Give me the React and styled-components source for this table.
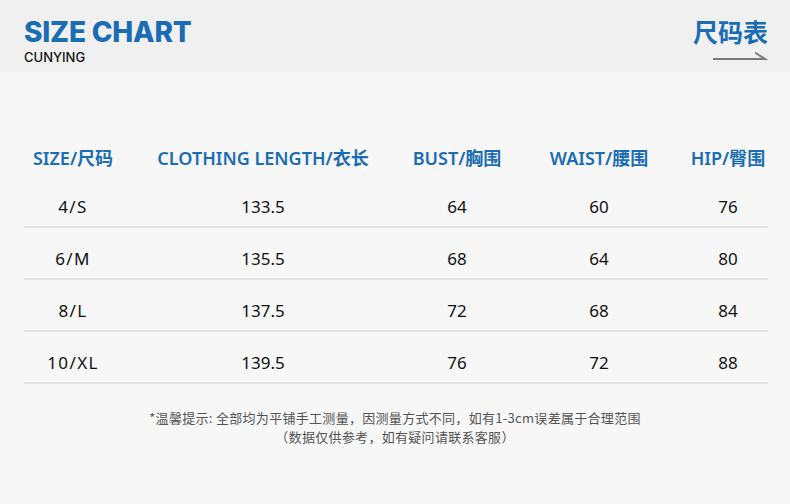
import React from 'react';
import styled, { createGlobalStyle } from 'styled-components';

const GlobalStyle = createGlobalStyle`
  html, body {
    margin: 0;
    padding: 0;
    background: #f7f7f7;
  }
  body {
    font-family: "Noto Sans", "Noto Sans CJK SC", sans-serif;
  }
`;

const columns = [
  { en: 'SIZE', zh: '尺码' },
  { en: 'CLOTHING LENGTH', zh: '衣长' },
  { en: 'BUST', zh: '胸围' },
  { en: 'WAIST', zh: '腰围' },
  { en: 'HIP', zh: '臀围' },
];

const rows = [
  ['4/S', '133.5', '64', '60', '76'],
  ['6/M', '135.5', '68', '64', '80'],
  ['8/L', '137.5', '72', '68', '84'],
  ['10/XL', '139.5', '76', '72', '88'],
];

function App() {
  return (
    <Page>
      <GlobalStyle />
      <Header>
        <Brand>
          <Title>SIZE CHART</Title>
          <SubTitle>CUNYING</SubTitle>
        </Brand>
        <Badge>
          <BadgeText>尺码表</BadgeText>
          <svg width="56" height="12" viewBox="0 0 56 12">
            <path d="M1 9 H53 L43 2.5" fill="none" stroke="#7a7a7a" strokeWidth="2" />
          </svg>
        </Badge>
      </Header>

      <Table>
        <HeadRow>
          {columns.map(c => (
            <HeadCell key={c.en}>{c.en}/{c.zh}</HeadCell>
          ))}
        </HeadRow>
        {rows.map(r => (
          <Row key={r[0]}>
            {r.map((v, i) => (
              <Cell key={i} $spaced={i === 0}>{v}</Cell>
            ))}
          </Row>
        ))}
      </Table>

      <Note>
        *温馨提示: 全部均为平铺手工测量，因测量方式不同，如有1-3cm误差属于合理范围
        <br />
        （数据仅供参考，如有疑问请联系客服）
      </Note>
    </Page>
  );
}

export default App;

const Page = styled.div`
  width: 790px;
  height: 504px;
  background: #f7f7f7;
  overflow: hidden;
`

const Header = styled.div`
  height: 72px;
  background: #f0f0f0;
  display: flex;
  justify-content: space-between;
  padding: 0 22px 0 24px;
  box-sizing: border-box;
`

const Brand = styled.div`
  display: flex;
  flex-direction: column;
  padding-top: 14px;
`

const Title = styled.div`
  font-family: Inter, "Noto Sans", sans-serif;
  font-weight: 800;
  font-size: 28px;
  line-height: 36px;
  color: #1a6db4;
  letter-spacing: -0.2px;
`

const SubTitle = styled.div`
  font-family: Inter, "Noto Sans", sans-serif;
  font-weight: 500;
  font-size: 13px;
  line-height: 14px;
  color: #111;
`

const Badge = styled.div`
  display: flex;
  flex-direction: column;
  align-items: flex-end;
  padding-top: 15px;
`

const BadgeText = styled.div`
  font-family: "Noto Sans CJK SC", sans-serif;
  font-weight: 700;
  font-size: 25px;
  line-height: 32px;
  color: #1a6db4;
  margin-bottom: 3px;
`

const Table = styled.div`
  margin: 74px 22px 0 24px;
`

const grid = `
  display: grid;
  grid-template-columns: 98px 282px 106px 178px 80px;
  justify-items: center;
`

const HeadRow = styled.div`
  ${grid}
  height: 30px;
`

const HeadCell = styled.div`
  font-family: "Noto Sans", "Noto Sans CJK SC", sans-serif;
  font-weight: 600;
  font-size: 18px;
  line-height: 24px;
  color: #1a6db4;
  white-space: nowrap;
`

const Row = styled.div`
  ${grid}
  height: 52px;
  box-sizing: border-box;
  border-bottom: 2px solid #e3e3e3;
  padding-top: 19px;
`

const Cell = styled.div`
  font-family: "Noto Sans", sans-serif;
  font-size: 17px;
  line-height: 24px;
  color: #111;
  letter-spacing: ${p => (p.$spaced ? '1.4px' : '0')};
`

const Note = styled.div`
  margin-top: 24px;
  text-align: center;
  font-family: "Noto Sans CJK SC", sans-serif;
  font-size: 13px;
  line-height: 19px;
  letter-spacing: 0.3px;
  color: #555;
`
